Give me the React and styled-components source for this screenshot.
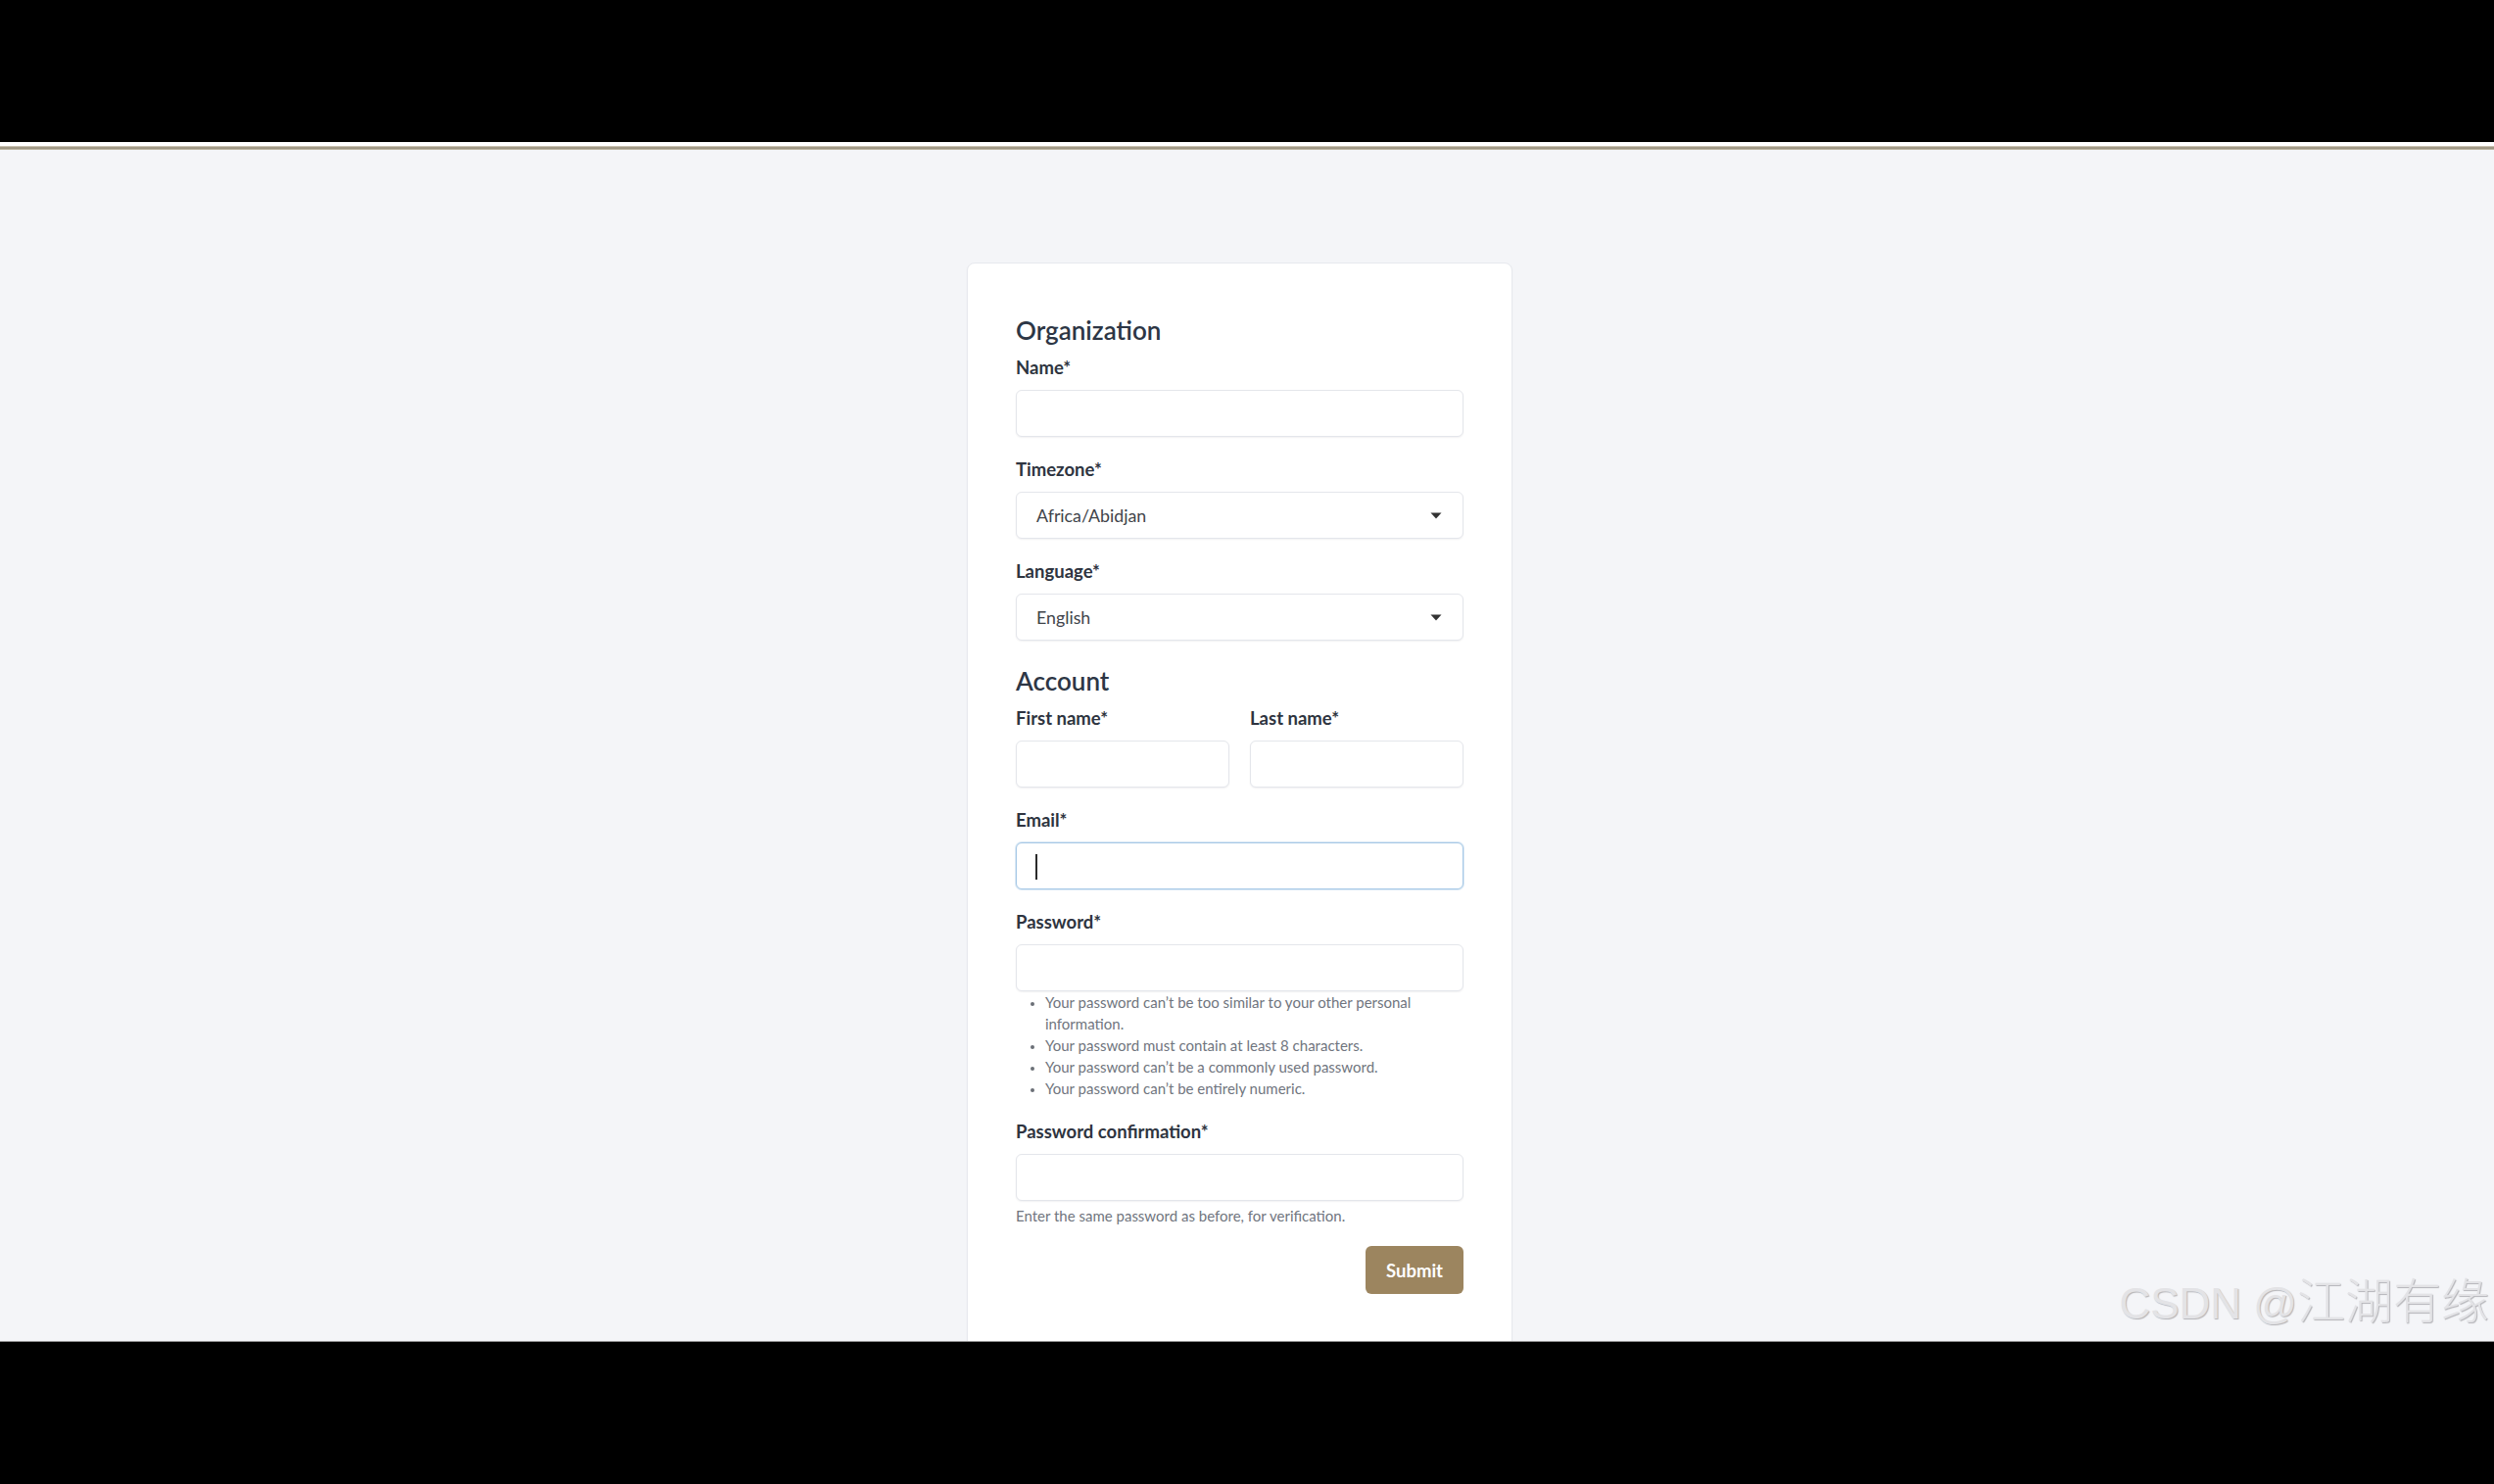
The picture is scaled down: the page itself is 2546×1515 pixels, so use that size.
import React from "react";
import styled, { createGlobalStyle } from "styled-components";

const GlobalStyle = createGlobalStyle`
  html, body {
    margin: 0;
    padding: 0;
    background: #000;
  }
  body {
    font-family: Lato, "Noto Sans", sans-serif;
  }
  * {
    box-sizing: border-box;
  }
`;

const Screen = styled.div`
  width: 2546px;
  height: 1515px;
  display: flex;
  flex-direction: column;
  background: #000;
  overflow: hidden;
`;

const Letterbox = styled.div`
  flex: 0 0 ${p => p.$h}px;
  background: #000;
  border-top: ${p => (p.$edge ? "1px solid #8e8e8e" : "none")};
`;

const HeaderEdge = styled.div`
  flex: 0 0 8px;
  background: linear-gradient(
    to bottom,
    #ffffff 0px,
    #ffffff 4px,
    #ddd5c4 4px,
    #8e8673 6px,
    #cfc7b3 8px
  );
`;

const Page = styled.main`
  position: relative;
  flex: 1;
  background: #f4f5f8;
  overflow: hidden;
  display: flex;
  justify-content: center;
  align-items: flex-start;
  padding: 115px 15px 0 0;
`;

const Card = styled.form`
  width: 557px;
  background: #fff;
  border: 1px solid #e7e9ee;
  border-radius: 8px;
  box-shadow: 0 1px 2px rgba(15, 23, 42, 0.04);
  padding: 53px 49px 80px;
`;

const SectionTitle = styled.h2`
  margin: ${p => (p.$first ? "0" : "26px")} 0 11px;
  font-size: 26px;
  line-height: 30px;
  font-weight: 600;
  color: #2d3645;
`;

const Field = styled.div`
  margin-bottom: ${p => (p.$last ? "0" : "21px")};
`;

const Label = styled.label`
  display: block;
  font-size: 18.5px;
  line-height: 24px;
  font-weight: 700;
  color: #2e3440;
  margin-bottom: 11px;
`;

const Row = styled.div`
  display: grid;
  grid-template-columns: 1fr 1fr;
  column-gap: 21px;
`;

const Input = styled.input`
  display: block;
  width: 100%;
  height: 48px;
  padding: 0 20px;
  border: 1px solid ${p => (p.$focused ? "#a6c8e6" : "#e4e6eb")};
  border-radius: 6px;
  box-shadow: ${p =>
    p.$focused ? "0 0 0 1px #dbe9f5" : "0 1px 2px rgba(16, 24, 40, 0.06)"};
  background: #fff;
  font-family: inherit;
  font-size: 17px;
  color: #333;
  outline: none;
`;

const InputWrap = styled.div`
  position: relative;
`;

const Caret = styled.span`
  position: absolute;
  left: 20px;
  top: 12px;
  width: 2px;
  height: 26px;
  background: #2b2b2b;
`;

const SelectBox = styled.div`
  display: flex;
  align-items: center;
  justify-content: space-between;
  height: 48px;
  padding: 0 21px 0 20px;
  border: 1px solid #e4e6eb;
  border-radius: 6px;
  box-shadow: 0 1px 2px rgba(16, 24, 40, 0.06);
  background: #fff;
  font-size: 17.8px;
  color: #41444a;
`;

const HelpList = styled.ul`
  margin: 0;
  padding-left: 30px;
  font-size: 15px;
  line-height: 22px;
  color: #70757e;

  li::marker {
    color: #6b6f76;
    font-size: 12px;
  }
`;

const HelpText = styled.div`
  margin-top: 4px;
  font-size: 15px;
  line-height: 22px;
  color: #70757e;
`;

const Actions = styled.div`
  display: flex;
  justify-content: flex-end;
  margin-top: 20px;
`;

const SubmitButton = styled.button`
  height: 49px;
  padding: 0 21px;
  border: none;
  border-radius: 6px;
  background: #9c855f;
  color: #fff;
  font-family: inherit;
  font-size: 18.5px;
  font-weight: 700;
  cursor: pointer;
`;

const Watermark = styled.div`
  position: absolute;
  right: 5px;
  bottom: 16px;
  font-family: "Liberation Sans", Arial, "Noto Sans CJK SC", sans-serif;
  font-size: 44px;
  line-height: 1;
  color: #e3e3e6;
  text-shadow: 1px 1px 1px #b4b4b8;
  white-space: nowrap;

  span {
    font-family: "Noto Sans CJK SC", sans-serif;
    font-size: 49px;
    font-weight: 300;
  }
`;

const Chevron = () => (
  <svg width="12" height="7" viewBox="0 0 12 7">
    <path d="M0.5 0.5h11L6 6.5z" fill="#333" />
  </svg>
);

const Select = ({ value }) => (
  <SelectBox>
    <span>{value}</span>
    <Chevron />
  </SelectBox>
);

const passwordRules = [
  "Your password can’t be too similar to your other personal information.",
  "Your password must contain at least 8 characters.",
  "Your password can’t be a commonly used password.",
  "Your password can’t be entirely numeric.",
];

export default function App() {
  return (
    <>
      <GlobalStyle />
      <Screen>
        <Letterbox $h={145} />
        <HeaderEdge />
        <Page>
          <Card onSubmit={e => e.preventDefault()}>
            <SectionTitle $first>Organization</SectionTitle>
            <Field>
              <Label>Name*</Label>
              <Input type="text" />
            </Field>
            <Field>
              <Label>Timezone*</Label>
              <Select value="Africa/Abidjan" />
            </Field>
            <Field>
              <Label>Language*</Label>
              <Select value="English" />
            </Field>

            <SectionTitle>Account</SectionTitle>
            <Row>
              <Field>
                <Label>First name*</Label>
                <Input type="text" />
              </Field>
              <Field>
                <Label>Last name*</Label>
                <Input type="text" />
              </Field>
            </Row>
            <Field>
              <Label>Email*</Label>
              <InputWrap>
                <Input type="email" $focused />
                <Caret />
              </InputWrap>
            </Field>
            <Field>
              <Label>Password*</Label>
              <Input type="password" />
              <HelpList>
                {passwordRules.map(rule => (
                  <li key={rule}>{rule}</li>
                ))}
              </HelpList>
            </Field>
            <Field $last>
              <Label>Password confirmation*</Label>
              <Input type="password" />
              <HelpText>Enter the same password as before, for verification.</HelpText>
            </Field>
            <Actions>
              <SubmitButton type="submit">Submit</SubmitButton>
            </Actions>
          </Card>
          <Watermark>
            CSDN @<span>江湖有缘</span>
          </Watermark>
        </Page>
        <Letterbox $h={146} $edge />
      </Screen>
    </>
  );
}
